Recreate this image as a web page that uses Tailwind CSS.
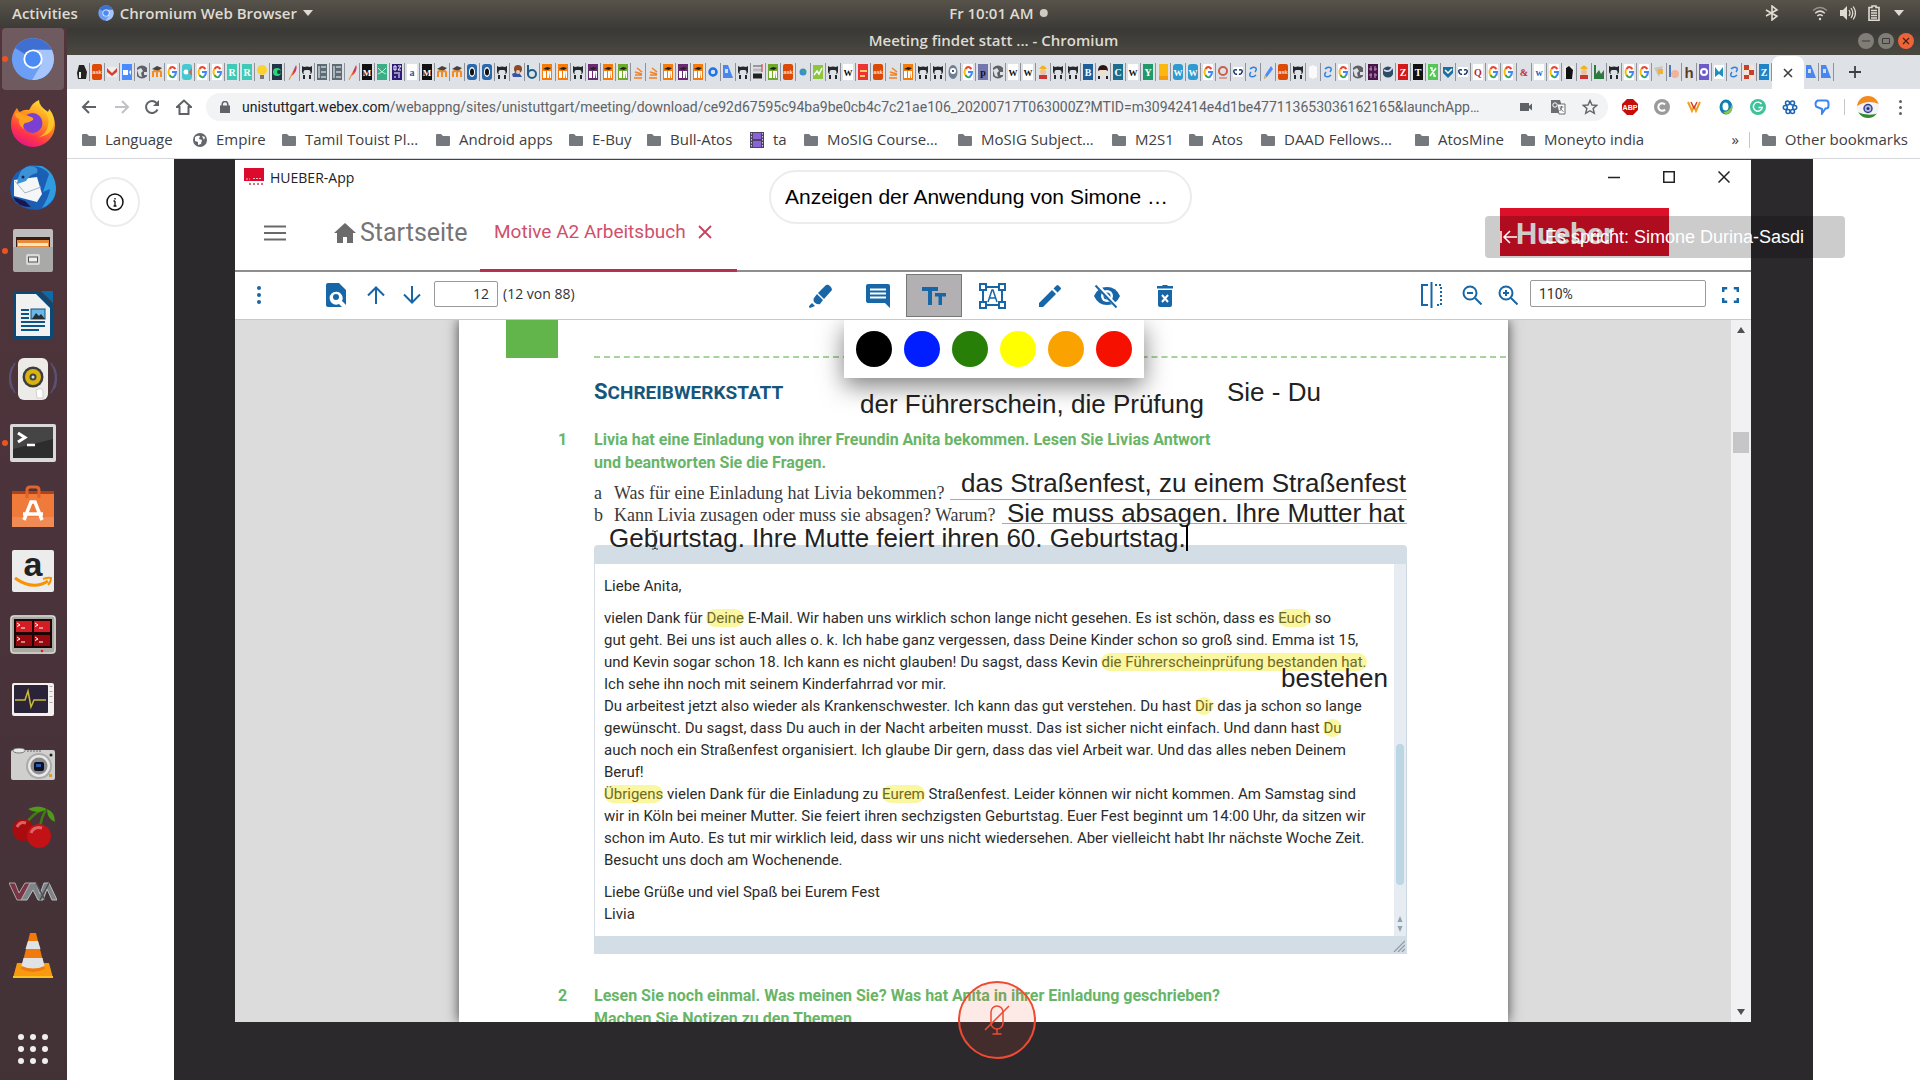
<!DOCTYPE html>
<html lang="de">
<head>
<meta charset="utf-8">
<title>Meeting findet statt ... - Chromium</title>
<script src="https://cdn.jsdelivr.net/npm/@tailwindcss/browser@4"></script>
</head>
<body class="h-screen overflow-hidden flex flex-col bg-white font-['Open_Sans',sans-serif] text-[15px] text-[#3c4043]">

<!-- GNOME top bar -->
<header class="relative h-7 shrink-0 flex items-center bg-linear-to-b from-[#57534a] to-[#3d3b37] text-[#dfdbd2] font-semibold px-3 pb-0.5">
  <button class="mr-5">Activities</button>
  <button class="flex items-center gap-1.5">
    <svg class="size-4" viewBox="0 0 48 48"><use href="#chromium"/></svg>
    <span>Chromium Web Browser</span>
    <svg class="w-2.5 h-1.5" viewBox="0 0 10 6"><path d="M0 0h10L5 6z" fill="#dfdbd2"/></svg>
  </button>
  <button class="absolute left-[52%] -translate-x-1/2 flex items-center gap-1.5">
    <span>Fr 10:01 AM</span><span class="size-2 rounded-full bg-[#cfcbc2]"></span>
  </button>
  <div class="ml-auto flex items-center text-[#dfdbd2]">
    <svg class="w-4 h-4 mr-8" viewBox="0 0 16 16" fill="none" stroke="currentColor" stroke-width="1.6"><path d="M2 5l11 6.2L8 15V1l5 3.8L2 11"/></svg>
    <svg class="w-4 h-4 mr-3" viewBox="0 0 16 16" fill="none" stroke="currentColor" stroke-width="1.5"><path d="M1 5.5Q8-.5 15 5.5" opacity=".5"/><path d="M3.2 8.300Q8 4 12.800 8.300M5.300 11Q8 8.500 10.700 11"/><circle cx="8" cy="14" r="1.200" fill="currentColor" stroke="none"/></svg>
    <svg class="w-4 h-4 mr-3" viewBox="0 0 16 16"><path d="M0 5h3l4-4v14l-4-4H0z" fill="currentColor"/><path d="M9 5q2 3 0 6M11 3q3.500 5 0 10M13.200 1.500q4.500 6.500 0 13" fill="none" stroke="currentColor" stroke-width="1.300"/></svg>
    <svg class="w-3 h-4 mr-3.5" viewBox="0 0 12 16"><path d="M4 1h4v1.500h3V15.200H1V2.500h3z" fill="none" stroke="currentColor" stroke-width="1.600"/><path d="M3 5.500h6M3 8h6M3 10.500h6M3 13h6" stroke="currentColor" stroke-width="1.300"/></svg>
    <svg class="w-2.5 h-1.5 mr-1" viewBox="0 0 10 6"><path d="M0 0h10L5 6z" fill="currentColor"/></svg>
  </div>
</header>

<div class="flex-1 min-h-0 flex">

<!-- Dock -->
<nav aria-label="Dock" class="w-[67px] shrink-0 bg-linear-to-b from-[#50363c] via-[#4b333b] to-[#423236] flex flex-col">
  <svg class="hidden">
    <symbol id="chromium" viewBox="0 0 48 48">
      <circle cx="24" cy="24" r="23" fill="#6a9ff5"/>
      <path d="M24 24L4.500 12A23 23 0 0 1 44.500 14z" fill="#3f6fd0"/>
      <path d="M24 14h20.500A23 23 0 0 1 23 47l10-17z" fill="#a6c5fa"/>
      <circle cx="24" cy="24" r="10.500" fill="#fff"/><circle cx="24" cy="24" r="8.500" fill="#4a8af4"/>
    </symbol>
  </svg>
  <ul class="flex flex-col" id="dock">
    <li class="relative h-16"><button aria-label="Chromium" class="ml-0.5 w-[62px] h-[62px] rounded-sm bg-[#6f5a5f] flex items-center justify-center"><svg class="size-11" viewBox="0 0 48 48"><use href="#chromium"/></svg></button><span class="absolute left-0.5 top-7 size-1.5 rounded-full bg-[#e95420]"></span></li>
    <li class="h-16"><button aria-label="Firefox" class="w-[66px] h-[62px] flex items-center justify-center"><svg class="size-12" viewBox="0 0 48 48"><defs><linearGradient id="ff" x1="0.800" y1="0" x2="0.300" y2="1"><stop offset="0" stop-color="#ffe83a"/><stop offset=".45" stop-color="#ff8a1c"/><stop offset=".75" stop-color="#ff3647"/><stop offset="1" stop-color="#e31587"/></linearGradient></defs><path d="M2 26C2 18 5 13 8 9q1 3 3 4 4-3 9-2 4-8 10-10 0 6 6 10l3 2q1-1 1-3 6 8 6 16a22 22 0 0 1-44 0z" fill="url(#ff)"/><circle cx="23.500" cy="24" r="10" fill="#7b3fd4"/><path d="M6 14q5-1 8 1l8 3q3 1 2 3-5 3-8 3-3 2-1 6-6-4-5-10-4-1-4-6z" fill="#ffa21f"/><path d="M30 1q0 8 6 12 5 6 3 14-2 8-9 11 14-2 15-15 0-8-5-13 0 2-1 3-9-6-9-12z" fill="#ffd02c" opacity=".8"/></svg></button></li>
    <li class="h-16"><button aria-label="Thunderbird" class="w-[66px] h-[62px] flex items-center justify-center"><svg class="size-12" viewBox="0 0 48 48"><path d="M18 3q14-4 23 7 9 12 4 26-6 10-18 11-17-1-24-12-5-14 4-25z" fill="#1b5fb4"/><path d="M22 3q12 0 18 8l-6 18 7-3q-1 8-8 19 14-6 14-20Q46 9 33 3z" fill="#2f9be0"/><path d="M5 17l23-3 5 17-5 8L5 33z" fill="#f4f6f8"/><path d="M6 18l10 12 16-6" fill="none" stroke="#a9b4c0"/><path d="M4 34l12 4 6 6Q8 44 4 34z" fill="#1a1750"/><path d="M9 15Q12 4 21 3q10 1 7 7-7 1-11 8l-9 3z" fill="#3c92d6"/><circle cx="14" cy="14" r="1.500" fill="#122a55"/></svg></button></li>
    <li class="relative h-16"><button aria-label="Files" class="w-[66px] h-[62px] flex items-center justify-center"><svg class="size-11" viewBox="0 0 44 44"><path d="M2 2q0-2 2-2h36q2 0 2 2v38H2z" fill="#bdbdbd"/><rect x="5" y="8" width="34" height="12" fill="#3a1d12"/><path d="M6 11h32v8H6z" fill="#e88a3a"/><path d="M7 14h30v3H7z" fill="#fbe3c0"/><path d="M2 18h40v23q0 2-2 2H4q-2 0-2-2z" fill="#a9a9a7"/><rect x="15" y="25" width="14" height="11" rx="2" fill="#d9d9d9"/><rect x="17.500" y="28" width="9" height="5" fill="#eee" stroke="#555"/></svg></button><span class="absolute left-0.5 top-7 size-1.5 rounded-full bg-[#e95420]"></span></li>
    <li class="h-16"><button aria-label="LibreOffice Writer" class="w-[66px] h-[62px] flex items-center justify-center"><svg class="w-10 h-12" viewBox="0 0 40 48"><path d="M2 0h24l14 14v32q0 2-2 2H2q-2 0-2-2V2q0-2 2-2z" fill="#0b4a78"/><path d="M28 0h12v12z" fill="#0b6cab"/><path d="M3 3h20l14 14v28H3z" fill="#f1f1f1"/><path d="M8 18h8v2H8zM8 22h8v2H8zM8 26h8v2H8zM8 30h24v2H8zM8 34h24v2H8zM8 38h18v2H8z" fill="#0b5687"/><rect x="18" y="18" width="14" height="10" fill="#6db5e4" stroke="#0b5687"/><path d="M19 28l4-6 3 3 2-2 4 5z" fill="#243036"/></svg></button></li>
    <li class="h-16"><button aria-label="Rhythmbox" class="w-[66px] h-[62px] flex items-center justify-center"><svg class="size-12" viewBox="0 0 48 48"><path d="M6 8q-9 14 0 30M3 12q-5 12 0 22M42 8q9 14 0 30M45 12q5 12 0 22" fill="none" stroke="#5a5175" stroke-width="1.500"/><rect x="9" y="3" width="30" height="42" rx="6" fill="#ecebe8"/><circle cx="24" cy="22" r="10.500" fill="#3d3d3d"/><circle cx="24" cy="22" r="8" fill="#d8b411"/><circle cx="24" cy="22" r="3.500" fill="#444"/><circle cx="24" cy="22" r="1.500" fill="#ddd"/><path d="M27 35q6-3 7 1v7h-6z" fill="#fff" stroke="#d0d0d0"/></svg></button></li>
    <li class="relative h-16"><button aria-label="Terminal" class="w-[66px] h-[62px] flex items-center justify-center"><svg class="w-12 h-10" viewBox="0 0 48 40"><rect x="1" y="1" width="46" height="38" rx="2" fill="#d9d9d7"/><rect x="4" y="4" width="40" height="31" fill="#2d2d2d"/><path d="M4 4h40v12L4 26z" fill="#454545"/><path d="M9 10l7 4.500L9 19" fill="none" stroke="#fff" stroke-width="3"/><path d="M18 22h8" stroke="#fff" stroke-width="2.500"/></svg></button><span class="absolute left-0.5 top-7 size-1.5 rounded-full bg-[#e95420]"></span></li>
    <li class="h-16"><button aria-label="Ubuntu Software" class="w-[66px] h-[62px] flex items-center justify-center"><svg class="size-11" viewBox="0 0 44 44"><path d="M1 6h42v8H1z" fill="#b0421a"/><path d="M1 9h42v33H1z" fill="#ef7a3a"/><path d="M1 32h42v10H1z" fill="#f08b55"/><path d="M16 13V5q0-3 3-3h6q3 0 3 3v8" fill="none" stroke="#e4632a" stroke-width="3"/><path d="M13 35l7-18h4l7 18M12 29h20" fill="none" stroke="#fff" stroke-width="3.500"/></svg></button></li>
    <li class="h-16"><button aria-label="Amazon" class="w-[66px] h-[62px] flex items-center justify-center"><svg class="size-11" viewBox="0 0 44 44"><rect x="1" y="1" width="42" height="42" rx="2" fill="#ececec"/><text x="22" y="27" text-anchor="middle" font-family="Liberation Sans, sans-serif" font-weight="700" font-size="34" fill="#222">a</text><path d="M4 29q18 13 33 3" fill="none" stroke="#f79400" stroke-width="3"/><path d="M32 30q6-2 8-1 0 4-3 7" fill="none" stroke="#f79400" stroke-width="2"/></svg></button></li>
    <li class="h-16"><button aria-label="Terminator" class="w-[66px] h-[62px] flex items-center justify-center"><svg class="w-12 h-10" viewBox="0 0 48 40"><rect x="1" y="0" width="46" height="39" rx="4" fill="#a9aaa4"/><rect x="2" y="1" width="44" height="37" rx="3" fill="none" stroke="#e4e4df"/><rect x="5" y="4" width="38" height="29" fill="#1c0304"/><path d="M7 6h16v11H7zM25 6h16v11H25z" fill="#d31c24"/><path d="M7 20h16v11H7zM25 20h16v11H25z" fill="#97090f"/><path d="M8 8l3 2-3 1.500M12 13h4M26 8l3 2-3 1.500M30 13h4M8 22l3 2-3 1.500M12 27h4M26 22l3 2-3 1.500M30 27h4" stroke="#fff" fill="none"/><circle cx="33" cy="36" r="1.300" fill="#d22"/></svg></button></li>
    <li class="h-16"><button aria-label="System Monitor" class="w-[66px] h-16 flex items-center justify-center"><svg class="w-11 h-[34px]" viewBox="0 0 44 34"><rect x="1" width="42" height="33" rx="2" fill="#f3f0ee"/><rect x="3" y="2" width="34" height="28" rx="1" fill="#2b2438"/><path d="M4 17h10l3-9 3 16 3-7h12" fill="none" stroke="#c9bb3a" stroke-width="1.500"/><path d="M40 3v1M40 8v1M40 13v1M40 19v1" stroke="#aaa" stroke-width="3"/></svg></button></li>
    <li class="h-16"><button aria-label="Camera" class="w-[66px] h-16 flex items-center justify-center"><svg class="w-11 h-8" viewBox="0 0 44 32"><rect y="2" width="44" height="30" rx="2" fill="#cfcfcd"/><ellipse cx="8" cy="2.500" rx="6" ry="2.500" fill="#e8e8e8" stroke="#777"/><path d="M16 3h14" stroke="#666" stroke-dasharray="2 1"/><circle cx="28" cy="18" r="13" fill="#aaa"/><circle cx="28" cy="18" r="11" fill="#e8e8e8"/><circle cx="28" cy="18" r="8.500" fill="#8b8b8b"/><rect x="23" y="14" width="10" height="9" rx="2" fill="#0b1020"/><path d="M25 16h5v3h-5z" fill="#2a58b0"/><circle cx="40" cy="7" r="1.500" fill="#222"/><rect x="38" y="26" width="3" height="3" fill="#e69a21"/></svg></button></li>
    <li class="h-16"><button aria-label="CherryTree" class="w-[66px] h-[62px] flex items-center justify-center"><svg class="size-11" viewBox="0 0 44 44"><path d="M14 20Q22 8 33 4M29 24Q30 12 35 5" fill="none" stroke="#3f7d12" stroke-width="2.500"/><path d="M17 4q10-5 19 0-10 6-19 0zM36 4q8 3 8 13-8-3-8-13z" fill="#4f9a16"/><ellipse cx="12" cy="25" rx="10.500" ry="11" fill="#a90c0f"/><ellipse cx="28" cy="31" rx="12" ry="12" fill="#c31216"/><path d="M6 22q3-6 9-4M20 28q3-7 11-5" stroke="#e88" stroke-width="3" fill="none" opacity=".7"/></svg></button></li>
    <li class="h-16"><button aria-label="VMM" class="w-[66px] h-16 flex items-center justify-center"><svg class="w-12 h-5" viewBox="0 0 48 20"><path d="M21 1h6l4 11 4-11h5l8 17h-5l-5-11-4 11h-5l-5-10-6 10h-6z" fill="#7f8488" stroke="#bcbcbc"/><path d="M0 1h6l4 10 6-10h5l-9 17H8z" fill="#7d3346" stroke="#a9a9a9"/><path d="M27 1l9 17M40 1l-9 17" stroke="#4c5054" stroke-width="1.500"/></svg></button></li>
    <li class="h-16"><button aria-label="VLC" class="w-[66px] h-[62px] flex items-center justify-center"><svg class="w-10 h-12" viewBox="0 0 40 48"><path d="M4 32h32l4 15H0z" fill="#f79a12"/><path d="M0 45h40v2H0z" fill="#ffc01f"/><path d="M17 2h6l9 36q-12 6-24 0z" fill="#f07a0c"/><path d="M15 10h10l2.500 8h-15zM10.500 27h19l2 8q-11 5-23 0z" fill="#dfe3e6"/></svg></button></li>
  </ul>
  <button aria-label="Show applications" class="mt-auto mb-4 mx-auto pr-0.5 grid grid-cols-3 gap-1.5"><span class="size-1.5 rounded-full bg-[#f1efee]"></span><span class="size-1.5 rounded-full bg-[#f1efee]"></span><span class="size-1.5 rounded-full bg-[#f1efee]"></span><span class="size-1.5 rounded-full bg-[#f1efee]"></span><span class="size-1.5 rounded-full bg-[#f1efee]"></span><span class="size-1.5 rounded-full bg-[#f1efee]"></span><span class="size-1.5 rounded-full bg-[#f1efee]"></span><span class="size-1.5 rounded-full bg-[#f1efee]"></span><span class="size-1.5 rounded-full bg-[#f1efee]"></span></button>
</nav>

<!-- Browser window -->
<div class="flex-1 min-w-0 flex flex-col">
  <div class="relative h-[27px] shrink-0 flex items-center justify-center pb-0.5 bg-linear-to-b from-[#3a3834] to-[#4a4841] text-[#dfdbd2] font-semibold">
    <h1>Meeting findet statt ... - Chromium</h1>
    <div class="absolute right-1.5 top-[5px] flex gap-1">
      <button aria-label="Minimize" class="size-4 rounded-full bg-[#7f7d76] flex items-center justify-center"><svg class="size-2" viewBox="0 0 8 8"><path d="M0 4h8" stroke="#3c3b37"/></svg></button>
      <button aria-label="Maximize" class="size-4 rounded-full bg-[#7f7d76] flex items-center justify-center"><svg class="size-2" viewBox="0 0 8 8"><path d="M.5 1.500h7v5h-7z" fill="none" stroke="#3c3b37"/></svg></button>
      <button aria-label="Close" class="size-4 rounded-full bg-[#ee6439] flex items-center justify-center"><svg class="size-2" viewBox="0 0 8 8"><path d="M1 1l6 6M7 1L1 7" stroke="#4a2015" stroke-width="1.300"/></svg></button>
    </div>
  </div>

  <!-- Tab strip -->
  <div class="h-[34px] shrink-0 flex bg-[#dee1e6] pl-2">
    <div id="tabs" class="flex-1 min-w-0 flex items-center"></div>
    <div class="w-8 mt-px rounded-t-lg bg-white flex items-center justify-center"><button aria-label="Close tab"><svg class="size-2.5" viewBox="0 0 10 10"><path d="M1 1l8 8M9 1L1 9" stroke="#3c4043" stroke-width="1.600"/></svg></button></div>
    <div id="tabs2" class="w-[30px] flex items-center"></div>
    <button aria-label="New tab" class="ml-3.5 mr-[58px] self-center"><svg class="size-3.5" viewBox="0 0 14 14"><path d="M7 1v12M1 7h12" stroke="#3c4043" stroke-width="1.800"/></svg></button>
  </div>

  <!-- Address bar -->
  <div class="h-9 shrink-0 flex items-center bg-white pl-3 pr-3.5 text-[#5f6368]">
    <button aria-label="Back" class="w-[33px] pl-0.5"><svg class="size-4" viewBox="0 0 16 16" fill="none" stroke="#5f6368" stroke-width="2"><path d="M15 8H2M8 2L2 8l6 6"/></svg></button>
    <button aria-label="Forward" class="w-8 pl-0.5"><svg class="size-4" viewBox="0 0 16 16" fill="none" stroke="#bfc1c4" stroke-width="2"><path d="M1 8h13M8 2l6 6-6 6"/></svg></button>
    <button aria-label="Reload" class="w-8"><svg class="size-4" viewBox="0 0 16 16"><path d="M13.500 10.500A6 6 0 1 1 12.500 4" fill="none" stroke="#5f6368" stroke-width="2"/><path d="M15 1v6H9z" fill="#5f6368"/></svg></button>
    <button aria-label="Home" class="w-[30px]"><svg class="size-4" viewBox="0 0 16 16" fill="none" stroke="#5f6368" stroke-width="2"><path d="M8 1.500L1 8h2.500v7h9V8H15z"/></svg></button>
    <div class="flex-1 min-w-0 h-7 rounded-full bg-[#f1f3f4] flex items-center pl-3.5 pr-2.5 font-[Roboto,sans-serif] text-sm">
      <svg class="w-2.5 h-3 mr-3 shrink-0" viewBox="0 0 10 12"><path d="M0 4.500h10V12H0z" fill="#5f6368"/><path d="M2.200 5V3.300a2.800 2.800 0 0 1 5.600 0V5" fill="none" stroke="#5f6368" stroke-width="1.500"/></svg>
      <div class="flex-1 min-w-0 truncate"><span class="text-[#202124]">unistuttgart.webex.com</span>/webappng/sites/unistuttgart/meeting/download/ce92d67595c94ba9be0cb4c7c21ae106_20200717T063000Z?MTID=m30942414e4d1be477113653036162165&amp;launchApp…</div>
      <div class="flex items-center gap-4 shrink-0">
        <svg class="size-4" viewBox="0 0 16 16"><path d="M2 4h9v3l3-2.500v7L11 9v3H2z" fill="#5f6368"/></svg>
        <svg class="size-4" viewBox="0 0 16 16"><path d="M1 1h9l4 13H1z" fill="#6b6f73"/><path d="M7 5h8v10H9z" fill="#fff" stroke="#6b6f73"/><path d="M9.500 8h4M11.500 7v1q0 3-2 4M10 9q1.500 2.500 3.500 3.500" stroke="#6b6f73" fill="none"/><circle cx="5" cy="6" r="2.200" fill="none" stroke="#fff"/></svg>
        <svg class="size-4" viewBox="0 0 16 16"><path d="M8 1.500l2 4.500 4.800.4-3.700 3.100 1.200 4.800L8 11.700l-4.300 2.600 1.200-4.800L1.200 6.400 6 6z" fill="none" stroke="#5f6368" stroke-width="1.400"/></svg>
      </div>
    </div>
    <div class="flex items-center gap-4 ml-3.5">
      <svg class="size-4" viewBox="0 0 16 16"><path d="M5 0h6l5 5v6l-5 5H5l-5-5V5z" fill="#c70d0c"/><text x="8" y="10.500" text-anchor="middle" font-family="Liberation Sans, sans-serif" font-weight="700" font-size="7" fill="#fff">ABP</text></svg>
      <svg class="size-4" viewBox="0 0 16 16"><circle cx="8" cy="8" r="8" fill="#9a9a9a"/><path d="M11 5.500a3.800 3.800 0 1 0 0 5" stroke="#fff" stroke-width="2" fill="none"/></svg>
      <svg class="size-4" viewBox="0 0 16 16"><path d="M2 3l4 9 2-5M8 7l2 5 4-9" fill="none" stroke="#f0a020" stroke-width="2"/><path d="M5 3l3 6 3-6" fill="none" stroke="#d8402a" stroke-width="1.500"/></svg>
      <svg class="size-4" viewBox="0 0 16 16"><ellipse cx="8" cy="8" rx="6.500" ry="7.500" fill="#0f7fb0"/><path d="M8 15.500Q16 14 14 5 12 13 5 13z" fill="#8ec641"/><ellipse cx="7.500" cy="7.500" rx="3" ry="4" fill="#fff"/></svg>
      <svg class="size-4" viewBox="0 0 16 16"><circle cx="8" cy="8" r="8" fill="#3cc39a"/><path d="M11.500 5a4.500 4.500 0 1 0 .8 3.500H8.500" stroke="#fff" stroke-width="1.400" fill="none"/></svg>
      <svg class="size-4" viewBox="0 0 16 16" fill="none" stroke="#1b62b5" stroke-width="1.500"><circle cx="5.500" cy="4" r="2"/><circle cx="10.500" cy="4" r="2"/><circle cx="3.300" cy="8.500" r="2"/><circle cx="12.700" cy="8.500" r="2"/><circle cx="6" cy="12.500" r="2"/><circle cx="10.500" cy="12.500" r="2"/></svg>
      <svg class="size-4" viewBox="0 0 16 16"><path d="M4 1.500h8q2.500 0 2.500 3V7q0 2.500-3 2.500L8 14.500V10L3 8Q1.500 7.500 1.500 5t2.500-3.500z" fill="none" stroke="#3a86f0" stroke-width="2"/></svg>
    </div>
    <span class="w-px h-4 ml-3.5 bg-[#c4c7ca]"></span>
    <svg class="size-[22px] ml-3 mr-5" viewBox="0 0 22 22"><clipPath id="av"><circle cx="11" cy="11" r="11"/></clipPath><g clip-path="url(#av)"><path d="M0 0h22v22H0z" fill="#f4f4f4"/><path d="M0 0h22v8Q11 3 0 10z" fill="#f58a1c"/><path d="M0 16q12 5 22 1v6H0z" fill="#2f8d2b"/></g><circle cx="11" cy="12.500" r="4" fill="#b5bce0" stroke="#34408f" stroke-width="1.500"/><circle cx="11" cy="12.500" r="1.500" fill="#26307a"/></svg>
    <button aria-label="Menu" class="flex flex-col gap-[3px] mr-1"><span class="size-[3px] rounded-full bg-[#5f6368]"></span><span class="size-[3px] rounded-full bg-[#5f6368]"></span><span class="size-[3px] rounded-full bg-[#5f6368]"></span></button>
  </div>

  <!-- Bookmarks -->
  <div class="h-[34px] shrink-0 flex items-center bg-white border-b border-[#d5d7da] pl-[15px] pr-3 pb-1 whitespace-nowrap">
    <svg class="hidden"><symbol id="folder" viewBox="0 0 14 12"><path d="M0 1q0-1 1-1h4l2 2h6q1 0 1 1v8q0 1-1 1H1q-1 0-1-1z" fill="#75787c"/></symbol></svg>
    <a href="#" class="w-[111px] flex items-center gap-[9px]"><svg class="w-3.5 h-3 shrink-0"><use href="#folder"/></svg>Language</a>
    <a href="#" class="w-[89px] flex items-center gap-[9px]"><svg class="size-3.5 shrink-0" viewBox="0 0 14 14"><circle cx="7" cy="7" r="7" fill="#63676b"/><path d="M2 4q3-2 5-1l-1 3 3 1-1 4-3 1v-3L2 8zM9 3l3 1-1 3z" fill="#fff"/></svg>Empire</a>
    <a href="#" class="w-[154px] flex items-center gap-[9px]"><svg class="w-3.5 h-3 shrink-0"><use href="#folder"/></svg>Tamil Touist Pl…</a>
    <a href="#" class="w-[133px] flex items-center gap-[9px]"><svg class="w-3.5 h-3 shrink-0"><use href="#folder"/></svg>Android apps</a>
    <a href="#" class="w-[78px] flex items-center gap-[9px]"><svg class="w-3.5 h-3 shrink-0"><use href="#folder"/></svg>E-Buy</a>
    <a href="#" class="w-[103px] flex items-center gap-[9px]"><svg class="w-3.5 h-3 shrink-0"><use href="#folder"/></svg>Bull-Atos</a>
    <a href="#" class="w-[54px] flex items-center gap-[9px]"><svg class="w-3.5 h-4 shrink-0" viewBox="0 0 14 16"><path d="M0 0h14v16H0z" fill="#4c4360"/><path d="M3 1h8v6H3zM3 9h8v6H3z" fill="#8c62d9"/><path d="M1.500 1v14M12.500 1v14" stroke="#cfc9dd" stroke-dasharray="1.500 1.500"/></svg>ta</a>
    <a href="#" class="w-[154px] flex items-center gap-[9px]"><svg class="w-3.5 h-3 shrink-0"><use href="#folder"/></svg>MoSIG Course…</a>
    <a href="#" class="w-[154px] flex items-center gap-[9px]"><svg class="w-3.5 h-3 shrink-0"><use href="#folder"/></svg>MoSIG Subject…</a>
    <a href="#" class="w-[77px] flex items-center gap-[9px]"><svg class="w-3.5 h-3 shrink-0"><use href="#folder"/></svg>M2S1</a>
    <a href="#" class="w-[72px] flex items-center gap-[9px]"><svg class="w-3.5 h-3 shrink-0"><use href="#folder"/></svg>Atos</a>
    <a href="#" class="w-[154px] flex items-center gap-[9px]"><svg class="w-3.5 h-3 shrink-0"><use href="#folder"/></svg>DAAD Fellows…</a>
    <a href="#" class="w-[106px] flex items-center gap-[9px]"><svg class="w-3.5 h-3 shrink-0"><use href="#folder"/></svg>AtosMine</a>
    <a href="#" class="flex items-center gap-[9px]"><svg class="w-3.5 h-3 shrink-0"><use href="#folder"/></svg>Moneyto india</a>
    <button class="ml-auto mr-2.5">»</button>
    <span class="w-px h-4 bg-[#c4c7ca] mr-3"></span>
    <a href="#" class="flex items-center gap-[9px]"><svg class="w-3.5 h-3 shrink-0"><use href="#folder"/></svg>Other bookmarks</a>
  </div>

  <!-- Webex meeting -->
  <main class="relative flex-1 min-h-0 px-[107px] bg-white">
    <button aria-label="Info" class="absolute left-[23px] top-[18px] size-[50px] rounded-full border-2 border-[#ececec] bg-white flex items-center justify-center"><svg class="size-[18px]" viewBox="0 0 18 18"><circle cx="9" cy="9" r="8" fill="none" stroke="#111" stroke-width="1.500"/><path d="M9 8v5M9 5v1.500M7.500 8H9M7.500 13h3" stroke="#111" stroke-width="1.300"/></svg></button>

    <div class="h-full bg-[#2b292c] pl-[61px] pr-[62px] pb-[58px]">
      <!-- Shared application window -->
      <section class="h-full flex flex-col bg-white border-t border-[#2f4f45] font-[Roboto,sans-serif]">
        <div class="h-9 shrink-0 flex items-center pl-[9px] pb-0.5 text-[14px] text-[#222] font-['Open_Sans',sans-serif]">
          <svg class="w-5 h-[18px] mr-1.5" viewBox="0 0 20 18"><path d="M0 0h20v13H0z" fill="#dc0a2c"/><path d="M2 11h4M9 10.500h9" stroke="#f7b9c2" stroke-dasharray="2 1"/><path d="M5 16h14" stroke="#dc6a7a" stroke-width="2" stroke-dasharray="2 2"/></svg>
          HUEBER-App
          <div class="ml-auto flex items-center gap-[43px] mr-[21px]">
            <button aria-label="Minimieren"><svg class="size-3" viewBox="0 0 12 12"><path d="M0 6.500h12" stroke="#222" stroke-width="1.500"/></svg></button>
            <button aria-label="Maximieren"><svg class="size-3" viewBox="0 0 12 12"><path d="M.75.75h10.500v10.500H.75z" fill="none" stroke="#222" stroke-width="1.500"/></svg></button>
            <button aria-label="Schließen"><svg class="size-3" viewBox="0 0 12 12"><path d="M.5.500l11 11M11.500.500l-11 11" stroke="#222" stroke-width="1.500"/></svg></button>
          </div>
        </div>
        <div class="h-[76px] shrink-0 flex border-b-2 border-[#8e8e8e]">
          <button aria-label="Menü" class="ml-[29px] self-center"><svg class="w-[22px] h-4" viewBox="0 0 22 16"><path d="M0 1.500h22M0 8h22M0 14.500h22" stroke="#6a6a6a" stroke-width="2"/></svg></button>
          <a href="#" class="ml-12 w-[146px] flex items-center gap-1 text-[25px] text-[#757575]"><svg class="w-[22px] h-5 shrink-0" viewBox="0 0 22 20"><path d="M11 0l11 10h-3v10h-6v-6H9v6H3V10H0z" fill="#6b6b6b"/></svg>Startseite</a>
          <div class="w-[257px] h-[76px] border-b-3 border-[#b8304f] flex items-center pl-3.5 pb-px text-[19px] text-[#d0506c]">Motive A2 Arbeitsbuch<button aria-label="Tab schließen" class="ml-3"><svg class="size-3.5" viewBox="0 0 14 14"><path d="M1 1l12 12M13 1L1 13" stroke="#c8415f" stroke-width="1.800"/></svg></button></div>
          <div class="ml-auto mr-[82px] mt-3 w-[169px] h-12 bg-[#dc1028] text-white font-bold text-[30px] leading-[52px] pl-4">Hueber</div>
        </div>

        <!-- Reader toolbar -->
        <div class="h-12 shrink-0 flex items-center border-b border-[#c9c9c9] text-[#1767a8]">
          <div class="w-[557px] flex items-center pb-0.5">
            <button aria-label="Mehr" class="ml-[22px] flex flex-col gap-[3px]"><span class="size-1 rounded-full bg-[#1767a8]"></span><span class="size-1 rounded-full bg-[#1767a8]"></span><span class="size-1 rounded-full bg-[#1767a8]"></span></button>
            <button aria-label="Suchen" class="ml-[65px]"><svg class="w-5 h-6" viewBox="0 0 20 24"><path d="M2 0h11l7 7v15l-4-4a6.500 6.500 0 1 0-3 3l3 3H2q-2 0-2-2V2q0-2 2-2z" fill="#1767a8"/><circle cx="10" cy="14" r="4" fill="#1767a8" stroke="#fff" stroke-width="2"/><path d="M13 17l5 5" stroke="#fff" stroke-width="2"/></svg></button>
            <button aria-label="Vorige Seite" class="ml-[21px]"><svg class="size-[18px]" viewBox="0 0 18 18" fill="none" stroke="#1767a8" stroke-width="2"><path d="M9 18V1.500M1 9.500l8-8 8 8"/></svg></button>
            <button aria-label="Nächste Seite" class="ml-[18px]"><svg class="size-[18px]" viewBox="0 0 18 18" fill="none" stroke="#1767a8" stroke-width="2"><path d="M9 0v16.500M1 8.500l8 8 8-8"/></svg></button>
            <input id="seite" aria-label="Seite" value="12" class="ml-[13px] mb-0.5 w-16 h-[26px] border border-[#9a9a9a] rounded-xs text-right pr-2 text-sm text-[#333] font-['Open_Sans',sans-serif]">
            <label for="seite" class="ml-[5px] mb-0.5 text-sm text-[#333] font-['Open_Sans',sans-serif]">(12 von 88)</label>
          </div>
          <div class="flex items-center">
            <button aria-label="Marker" class="w-[57px] h-[43px] flex items-center justify-center"><svg class="size-6" viewBox="0 0 24 24"><path d="M17 1q2-1 4 1t2 4l-8 9-6-6zM8 10l6 6-3 4q-3 1-6-2-1-3 0-4zM3 19l3 3-5 2q-2-1 0-3z" fill="#1767a8"/></svg></button>
            <button aria-label="Kommentar" class="w-[57px] h-[43px] flex items-center justify-center"><svg class="size-6" viewBox="0 0 24 24"><path d="M2 0h20q2 0 2 2v22l-5-5H2q-2 0-2-2V2q0-2 2-2z" fill="#1767a8"/><path d="M4 5.500h16M4 9.500h16M4 13.500h16" stroke="#fff" stroke-width="2"/></svg></button>
            <button aria-label="Text" class="w-[56px] h-[43px] border border-[#777] bg-[#b3b0b3] flex items-center justify-center"><svg class="w-6 h-5" viewBox="0 0 24 20"><path d="M0 1h16v4h-6v14H6V5H0zM13 7h11v3.500h-4V19h-3.500v-8.500H13z" fill="#1767a8"/></svg></button>
            <button aria-label="Textfeld" class="w-[60px] h-[43px] flex items-center justify-center"><svg class="w-[27px] h-[26px]" viewBox="0 0 27 26" fill="none" stroke="#1767a8" stroke-width="2"><path d="M7 4h13M7 22h13M4 7v12M23 7v12"/><path d="M1 1h6v6H1zM20 1h6v6h-6zM1 19h6v6H1zM20 19h6v6h-6z"/><path d="M9 19l4-12h1l4 12M10.500 15h6" stroke-width="1.500"/></svg></button>
            <button aria-label="Stift" class="w-[56px] h-[43px] flex items-center justify-center"><svg class="size-[22px]" viewBox="0 0 22 22"><path d="M0 22v-4L13 5l4 4L4 22zM14.500 3.500l3-3q1-1 2 0l2 2q1 1 0 2l-3 3z" fill="#1767a8"/></svg></button>
            <button aria-label="Ausblenden" class="w-[58px] h-[43px] flex items-center justify-center"><svg class="w-[26px] h-6" viewBox="0 0 26 24"><path d="M0 12Q4 3 13 3t13 9q-4 9-13 9T0 12z" fill="#1767a8"/><circle cx="13" cy="12" r="6" fill="#fff"/><circle cx="13" cy="12" r="3.500" fill="#1767a8"/><path d="M3 1l20 22" stroke="#fff" stroke-width="4"/><path d="M1.500 1.500l21 22" stroke="#1767a8" stroke-width="2"/></svg></button>
            <button aria-label="Löschen" class="w-[57px] h-[43px] flex items-center justify-center"><svg class="w-4 h-[22px]" viewBox="0 0 16 22"><path d="M0 1h5l1-1h4l1 1h5v2.500H0zM1 5h14v15q0 2-2 2H3q-2 0-2-2z" fill="#1767a8"/><path d="M5 10l6 7M11 10l-6 7" stroke="#fff" stroke-width="2"/></svg></button>
          </div>
          <div class="ml-auto mr-3 pb-0.5 flex items-center">
            <button aria-label="Vergleichen"><svg class="w-[21px] h-[26px]" viewBox="0 0 21 26" fill="none" stroke="#1767a8" stroke-width="2"><path d="M7 3H1v20h6M10.500 0v26"/><path d="M14 3h6v20h-6" stroke-dasharray="2 2"/></svg></button>
            <button aria-label="Verkleinern" class="ml-5"><svg class="size-5" viewBox="0 0 20 20" fill="none" stroke="#1767a8" stroke-width="2"><circle cx="8" cy="8" r="6.500"/><path d="M13 13l6.500 6.500M5 8h6"/></svg></button>
            <button aria-label="Vergrößern" class="ml-4"><svg class="size-5" viewBox="0 0 20 20" fill="none" stroke="#1767a8" stroke-width="2"><circle cx="8" cy="8" r="6.500"/><path d="M13 13l6.500 6.500M5 8h6M8 5v6"/></svg></button>
            <input aria-label="Zoom" value="110%" class="ml-3 mb-0.5 w-[176px] h-[27px] border border-[#9a9a9a] rounded-xs pl-2 text-sm text-[#333]">
            <button aria-label="Vollbild" class="ml-4"><svg class="w-[17px] h-4" viewBox="0 0 17 16" fill="none" stroke="#1767a8" stroke-width="2.500"><path d="M1.200 5V1.200h4M11.800 1.200h4V5M15.800 11v3.800h-4M5.200 14.800h-4V11"/></svg></button>
          </div>
        </div>

        <!-- Book page -->
        <div class="relative flex-1 min-h-0 overflow-hidden flex bg-[#dddcdd] text-[#2b2b2b]">
          <article class="ml-[224px] mr-[243px] flex-1 min-w-0 bg-white shadow-[0_0_12px_rgba(0,0,0,0.7)]">
            <div class="flex h-[38px] pl-[47px]"><div class="w-[52px] bg-[#62b54a]"></div><div class="ml-9 flex-1 mr-0.5 border-b-2 border-dashed border-[#a9d39c]"></div></div>
            <div class="pl-[135px]">
              <h2 class="mt-5 h-7 leading-7 text-[19px] font-bold text-[#17567c]"><span class="text-[22px]">S</span>CHREIBWERKSTATT</h2>
              <h3 class="relative mt-[22px] leading-[23px] text-base font-bold text-[#68b567]"><span class="absolute -left-9">1</span>Livia hat eine Einladung von ihrer Freundin Anita bekommen. Lesen Sie Livias Antwort<br>und beantworten Sie die Fragen.</h3>
              <div class="mt-2 mr-[101px] leading-[22px] text-lg text-[#3a3a3a] font-['Liberation_Serif',serif]">
                <div class="flex"><span class="w-5">a</span><span>Was für eine Einladung hat Livia bekommen?</span><span class="flex-1 ml-1.5 mb-1 border-b border-[#aaa]"></span></div>
                <div class="flex"><span class="w-5">b</span><span>Kann Livia zusagen oder muss sie absagen? Warum?</span><span class="flex-1 ml-1.5 mb-0.5 border-b border-[#aaa]"></span></div>
              </div>
              <div class="mt-[19px] mr-[101px] flex flex-col">
                <div class="h-[19px] bg-[#d3dde6] rounded-t-sm"></div>
                <div class="flex border-l border-[#d8dce4]">
                  <div class="flex-1 min-w-0 py-[11px] pl-[9px] leading-[22px] text-[15px] whitespace-nowrap">
                    <p>Liebe Anita,</p>
                    <p class="mt-2.5">vielen Dank für <mark class="bg-[#fbf6a0] text-[#6f6a25] rounded-full">Deine</mark> E-Mail. Wir haben uns wirklich schon lange nicht gesehen. Es ist schön, dass es <mark class="bg-[#fbf6a0] text-[#6f6a25] rounded-full">Euch</mark> so<br>gut geht. Bei uns ist auch alles o. k. Ich habe ganz vergessen, dass Deine Kinder schon so groß sind. Emma ist 15,<br>und Kevin sogar schon 18. Ich kann es nicht glauben! Du sagst, dass Kevin <mark class="bg-[#fbf6a0] text-[#6f6a25] rounded-full">die Führerscheinprüfung bestanden hat.</mark><br>Ich sehe ihn noch mit seinem Kinderfahrrad vor mir.</p>
                    <p>Du arbeitest jetzt also wieder als Krankenschwester. Ich kann das gut verstehen. Du hast <mark class="bg-[#fbf6a0] text-[#6f6a25] rounded-full">Dir</mark> das ja schon so lange<br>gewünscht. Du sagst, dass Du auch in der Nacht arbeiten musst. Das ist sicher nicht einfach. Und dann hast <mark class="bg-[#fbf6a0] text-[#6f6a25] rounded-full">Du</mark><br>auch noch ein Straßenfest organisiert. Ich glaube Dir gern, dass das viel Arbeit war. Und das alles neben Deinem<br>Beruf!</p>
                    <p><mark class="bg-[#fbf6a0] text-[#6f6a25] rounded-full">Übrigens</mark> vielen Dank für die Einladung zu <mark class="bg-[#fbf6a0] text-[#6f6a25] rounded-full">Eurem</mark> Straßenfest. Leider können wir nicht kommen. Am Samstag sind<br>wir in Köln bei meiner Mutter. Sie feiert ihren sechzigsten Geburtstag. Euer Fest beginnt um 14:00 Uhr, da sitzen wir<br>schon im Auto. Es tut mir wirklich leid, dass wir uns nicht wiedersehen. Aber vielleicht habt Ihr nächste Woche Zeit.<br>Besucht uns doch am Wochenende.</p>
                    <p class="mt-2.5">Liebe Grüße und viel Spaß bei Eurem Fest<br>Livia</p>
                  </div>
                  <div class="w-[13px] bg-[#e6ecf1] border-r border-[#ccd7e2] flex flex-col items-center pt-[180px] pb-1">
                    <div class="w-2 h-[141px] rounded-full bg-[#bcd6e4]"></div>
                    <svg class="mt-auto w-1.5 h-4" viewBox="0 0 6 16"><path d="M3 0l2.500 6h-5zM3 16l2.500-6h-5z" fill="#8fa3b3"/></svg>
                  </div>
                </div>
                <div class="h-[18px] bg-[#d3dde6] flex justify-end items-end p-0.5"><svg class="size-3" viewBox="0 0 12 12"><path d="M1 12L12 1M5 12l7-7M9 12l3-3" stroke="#8d99a6" stroke-width="1.200"/></svg></div>
              </div>
              <h3 class="relative mt-[30px] leading-[23px] text-base font-bold text-[#68b567]"><span class="absolute -left-9">2</span>Lesen Sie noch einmal. Was meinen Sie? Was hat Anita in ihrer Einladung geschrieben?<br>Machen Sie Notizen zu den Themen</h3>
            </div>
          </article>

          <div class="absolute right-0 inset-y-0 w-5 bg-[#f1f0f2] flex flex-col items-center py-[7px]">
            <svg class="w-2 h-1.5" viewBox="0 0 8 6"><path d="M4 0l4 6H0z" fill="#505050"/></svg>
            <div class="mt-[99px] w-4 h-[21px] bg-[#c6c5c7]"></div>
            <svg class="mt-auto w-2 h-1.5" viewBox="0 0 8 6"><path d="M4 6l4-6H0z" fill="#505050"/></svg>
          </div>

          <!-- Typed annotations on the page canvas -->
          <div class="absolute inset-0 font-['Liberation_Sans',sans-serif] text-[26px] leading-8 text-[#222] whitespace-nowrap">
            <p class="absolute left-[625px] top-[68px]">der Führerschein, die Prüfung</p>
            <p class="absolute left-[992px] top-[56px]">Sie - Du</p>
            <p class="absolute left-[726px] top-[147px]">das Straßenfest, zu einem Straßenfest</p>
            <p class="absolute left-[772px] top-[177px]">Sie muss absagen. Ihre Mutter hat</p>
            <p class="absolute left-[374px] top-[202px] flex items-center">Geburtstag. Ihre Mutte feiert ihren 60. Geburtstag.<span class="w-0.5 h-[26px] bg-black"></span></p>
            <p class="absolute left-[1046px] top-[342px]">bestehen</p>
            <svg class="absolute left-[416px] top-[210px] w-2 h-5" viewBox="0 0 8 20"><path d="M1 1h2l1 1 1-1h2M4 2v16M1 19h2l1-1 1 1h2" fill="none" stroke="#333"/></svg>
          </div>

          <div class="absolute left-[609px] top-0 w-[300px] h-[58px] bg-white shadow-[0_8px_24px_rgba(0,0,0,0.5)] flex items-center justify-center gap-3">
            <button aria-label="Schwarz" class="size-9 rounded-full bg-black"></button>
            <button aria-label="Blau" class="size-9 rounded-full bg-[#001eff]"></button>
            <button aria-label="Grün" class="size-9 rounded-full bg-[#277f08]"></button>
            <button aria-label="Gelb" class="size-9 rounded-full bg-[#ffff00]"></button>
            <button aria-label="Orange" class="size-9 rounded-full bg-[#f9a200]"></button>
            <button aria-label="Rot" class="size-9 rounded-full bg-[#f51000]"></button>
          </div>
        </div>
      </section>
    </div>

    <!-- Meeting overlays -->
    <div class="absolute left-[702px] top-[11px] w-[423px] h-[54px] rounded-full border-2 border-[#ececec] bg-white flex items-center px-3.5 font-['Liberation_Sans',sans-serif] text-[21px] text-black whitespace-nowrap">Anzeigen der Anwendung von Simone …</div>
    <div class="absolute right-[75px] top-[57px] w-[360px] h-[42px] rounded-sm bg-black/20 flex items-center pl-[15px] font-['Liberation_Sans',sans-serif] text-lg text-white">
      <button aria-label="Einklappen" class="mr-7"><svg class="w-[17px] h-4" viewBox="0 0 17 16" fill="none" stroke="#fff" stroke-width="1.500"><path d="M1 2v12M17 8H4M10 2L4 8l6 6"/></svg></button>Es spricht: Simone Durina-Sasdi
    </div>
    <button aria-label="Stummschaltung aufheben" class="absolute left-[891px] bottom-[21px] size-[78px] rounded-full border-2 border-[#f04a33] bg-[#f04a33]/12 flex items-center justify-center"><svg class="w-[26px] h-[30px]" viewBox="0 0 26 30" fill="none" stroke="#f04a33" stroke-width="1.500"><rect x="7" y="1" width="12" height="23" rx="6"/><path d="M13 24v5M8.500 29h9M1 25L25 1"/></svg></button>
  </main>
</div>
</div>

<script>
// Favicons of the crowded tab strip: each entry is either text on a tile or a small drawing.
const tile = (bg, fg, ch, size = 10) => `<path d="M0 0h10v16H0z" fill="${bg}"/><text x="5" y="12" text-anchor="middle" font-family="Liberation Serif, serif" font-weight="700" font-size="${size}" fill="${fg}">${ch}</text>`;
const moodle = bg => `<path d="M0 0h10v16H0z" fill="${bg}"/><path d="M1 5l4-2 4 1-3 2z" fill="#222"/><path d="M1 7h3v7H1zM5 7h2v7H5zM7 7h2v7H8z" fill="#fff"/>`;
const icons = {
  tux: '<path d="M2 1h5l3 7-1 7H1L0 9z" fill="#222"/><path d="M2 8h2v6H2z" fill="#eee"/>',
  ask: '<rect width="10" height="16" rx="2" fill="#dc4a06"/><text x="5" y="10" text-anchor="middle" font-family="Liberation Sans, sans-serif" font-size="6" fill="#fff">ask</text>',
  v: '<path d="M0 3h10v10H0z" fill="#eee"/><path d="M0 4l5 5 5-5v4l-5 4-5-4z" fill="#d6402f"/>',
  zoom: '<path d="M0 0h10v16H0z" fill="#4a8cff"/><path d="M1 6h5v5H1zM7 8l2-2v5z" fill="#fff"/>',
  globe: '<circle cx="5" cy="8" r="6.500" fill="#5f6368"/><path d="M0 6l4-2 2 3-2 2 1 4-3-1zM7 8h3v3H7z" fill="#dee1e6"/>',
  m: '<path d="M0 5l5-3 5 2-4 3z" fill="#444"/><path d="M1 13V8q2-2 4 0v5M5 8q3-2 4 0v5" fill="none" stroke="#f68b1f" stroke-width="2"/>',
  G: '<rect width="10" height="16" rx="1" fill="#fff"/><path d="M8.500 5Q5 1 2.500 5" fill="none" stroke="#ea4335" stroke-width="2"/><path d="M2.300 5q-1.500 3 0 6" fill="none" stroke="#fbbc05" stroke-width="2"/><path d="M2.500 11q2 3.500 5 1.500" fill="none" stroke="#34a853" stroke-width="2"/><path d="M5 8h4q0 3-2 4.500" fill="none" stroke="#4285f4" stroke-width="2"/>',
  cam: '<rect width="10" height="16" rx="3" fill="#45c8cf"/><circle cx="4" cy="8" r="2.500" fill="#fff"/><path d="M6 8l4-4v8z" fill="#a77"/>',
  R: tile('#3fcab5', '#fff', 'R'), bulb: '<circle cx="5" cy="6" r="5" fill="#fbd12d"/><path d="M3 11h4v4H3z" fill="#777"/>',
  spot: '<path d="M0 0h10v16H0z" fill="#243447"/><circle cx="5" cy="8" r="4" fill="#2ad47b"/><circle cx="7" cy="8" r="2" fill="#243447"/>',
  feather: '<path d="M2 16L9 1q2 4-2 9l-4 3z" fill="#d2385c"/><path d="M2 16l4-8" stroke="#f7941d"/>',
  gh: '<path d="M0 2l2 1q3-1 6 0l2-1v6l-1 2H1L0 8z" fill="#24292e"/><rect x="1.500" y="6" width="7" height="5" rx="2" fill="#dee1e6"/><path d="M2 11v4M8 11v4" stroke="#24292e" stroke-width="2" fill="none"/>',
  list: '<path d="M0 0h10v16H0z" fill="#5d6b75"/><path d="M2 2v12M4 3h5M4 8h5M4 13h5" stroke="#fff"/>',
  M: tile('#111', '#fff', 'M', 9), ev: '<path d="M0 0h10v16H0z" fill="#3aaf85"/><path d="M1 4l4 4 4-4M1 10l4-2 4 2" stroke="#c6eadc" fill="none"/>',
  orz: '<path d="M0 0h10v16H0z" fill="#2e1a78"/><path d="M2 2h2v4H2zM6 2h3l-3 4h3M2 9h6M2 13h2M7 10v4" fill="none" stroke="#fff"/>', a: tile('#fff', '#1a5ea8', 'a'),
  O: '<rect width="10" height="16" rx="3" fill="#2b69ad"/><ellipse cx="5" cy="8" rx="3" ry="5" fill="#fff"/><ellipse cx="5" cy="8" rx="2" ry="3.500" fill="#111"/>',
  person: '<circle cx="6" cy="5" r="4" fill="#8a4a2a"/><path d="M0 10l6-3 4 6H1z" fill="#35a"/><circle cx="6" cy="8" r="2" fill="#f2c7a5"/>',
  b: '<path d="M1 1v10" stroke="#205f8c" stroke-width="2"/><circle cx="5" cy="10" r="4" fill="none" stroke="#205f8c" stroke-width="2"/>',
  to: moodle('#f57c0a'), tp: moodle('#6a2c70'), tg: moodle('#6faa2b'),
  so: '<path d="M1 14h8M2 11h7M2 8l7 2M4 4l5 4" stroke="#f48024" stroke-width="1.500"/>',
  gear: '<circle cx="5" cy="8" r="3.500" fill="none" stroke="#1a73e8" stroke-width="2.500"/>',
  tr: '<path d="M0 1h5l5 13H0z" fill="#4a86f0"/><path d="M2 5h3v4H2z" fill="#cfe0ff"/>',
  bars: '<path d="M0 2h9" stroke="#999" stroke-width="2"/><path d="M0 6h9" stroke="#bbb" stroke-width="3"/><path d="M0 12h9" stroke="#222" stroke-width="5"/><path d="M9 0v8" stroke="#d33"/>',
  earth: '<circle cx="5" cy="8" r="3.500" fill="#3a8fd0"/><path d="M4 6l3 1-1 3z" fill="#4fae4a"/>',
  chart: '<path d="M0 1h10v14H0z" fill="#8cc63f"/><path d="M1 11l3-4 2 3 3-6" stroke="#fff" fill="none" stroke-width="1.500"/>',
  W: tile('#fff', '#111', 'W', 9), flag: '<path d="M0 0h10v16H0z" fill="#e33"/><path d="M2 7h7M2 12h5" stroke="#fc6" stroke-width="2"/>',
  owl: '<ellipse cx="5" cy="8" rx="4.500" ry="7" fill="#6d7f92"/><circle cx="5" cy="7" r="3" fill="#fff"/><circle cx="5" cy="7" r="1" fill="#222"/>',
  php: tile('#7377ad', '#111', 'p'), fire: '<path d="M1 5q4-7 8 0z" fill="#f2b21b"/><circle cx="5" cy="8" r="3" fill="#f0bf92"/><path d="M1 11h8v4H1z" fill="#c33"/>',
  B: tile('#1d5f96', '#fff', 'B'), face: '<path d="M0 7q0-6 5-6t5 6l-2-1H2z" fill="#2a1713"/><path d="M2 6h6v5H2z" fill="#f4dccb"/><path d="M1 12v3M9 12v3" stroke="#222" stroke-width="2"/>',
  CF: tile('#1f6d8c', '#fff', 'C'), Y: tile('#21996b', '#fff', 'Y'), yel: '<path d="M1 0h9v16H1z" fill="#fbb80e"/><path d="M1 12h9v4H1z" fill="#f79a0e"/>',
  wp: '<rect width="10" height="16" rx="3" fill="#2f9bd0"/><text x="5" y="11.500" text-anchor="middle" font-family="Liberation Serif, serif" font-weight="700" font-size="9" fill="#fff">W</text>',
  seal: '<circle cx="5" cy="7" r="4" fill="none" stroke="#c9604a" stroke-width="2"/><path d="M1 14h8" stroke="#c9604a"/>',
  x: '<path d="M0 3h10v10H0z" fill="#fff"/><path d="M4 6q-4-1-3 2t3 2M6 6q4-1 3 2t-3 2" stroke="#153468" stroke-width="1.500" fill="none"/>',
  swirl: '<path d="M2 5q3-3 6-1 1 2-1 4M8 11q-3 3-6 1-1-2 1-4" fill="none" stroke="#2b7fe0" stroke-width="1.500"/>',
  pen: '<path d="M1 15l1-4L8 2l2 3-6 8z" fill="#4a8cff"/><path d="M1 15l1-4 2 2z" fill="#f6b73c"/>',
  box: '<path d="M1 3l4-2 4 2v10l-4 2-4-2z" fill="#fafafa"/>',
  slack: '<path d="M0 0h10v16H0z" fill="#4a154b"/><path d="M3 2v5M7 2v5M3 9v5M7 9v5M1 5h3M6 5h3M1 11h3M6 11h3" stroke="#b894b9"/>',
  bg: '<circle cx="5" cy="8" r="5.500" fill="#2c4d68"/><path d="M1 6q5 3 8-2" stroke="#dde" fill="none" stroke-width="1.500"/>',
  Zr: tile('#d31a1a', '#fff', 'Z'), T: tile('#111', '#fff', 'T'), Zg: '<path d="M0 0h10v16H0z" fill="#53c653"/><path d="M2 12l6-8M2 4h2v3M8 12H6V9" stroke="#fff" stroke-width="1.500" fill="none"/>',
  chk: '<path d="M0 3h10v6l-5 5-5-5z" fill="#1f6f9e"/><path d="M2 6l3 3 4-4" stroke="#fff" fill="none" stroke-width="1.500"/>',
  Q: tile('#fff', '#b92b27', 'Q'), amp: tile('#dee1e6', '#c0303a', '&amp;'), who: tile('#fff', '#2b68c0', 'w'),
  blk: '<path d="M0 2h10v12H0z" fill="#eee"/><path d="M2 4l3-2 4 4-1 9H2z" fill="#111"/>', gr: '<path d="M0 1h2v9l3-4 2 4 3-4v9H0z" fill="#2c7a3f"/>',
  c: '<path d="M0 4l9-2-4 11z" fill="#c9c4bc"/><path d="M4 5h5v5H4z" fill="#f0b23a"/>', bb: '<path d="M1 1v12" stroke="#4b78c0" stroke-width="2"/><circle cx="6" cy="10" r="4" fill="#f0b49a"/>',
  h: '<text x="5" y="14" text-anchor="middle" font-family="Liberation Sans, sans-serif" font-weight="700" font-size="15" fill="#5d3b1e">h</text>',
  pu: '<path d="M0 0h10v16H0z" fill="#6c5bc9"/><circle cx="5" cy="8" r="3" fill="none" stroke="#fff" stroke-width="2"/>',
  Mb: '<path d="M0 1h10v14H0z" fill="#fff"/><path d="M1 13V3l4 5 4-5v10l-4-3z" fill="#1f8fc2"/>',
  red: '<path d="M0 1h10v14H0z" fill="#f5e5d5"/><path d="M0 1h5v5H0zM5 6h5v5H5zM0 11h5v4H0z" fill="#c8402c"/>', Zb: tile('#1f83c6', '#fff', 'Z')
};
const order = 'tux ask v zoom globe m G cam G G R R bulb spot feather gh list list feather M ev orz a M m m O O gh person b to to gh tp to tg so so to tp to gear tr gh bars tg ask earth chart gh W flag ask so to gh gh owl G php globe W W fire gh gh B face CF W Y yel wp wp G seal x swirl pen ask gh box swirl G globe slack bg Zr T Zg chk x Q G G amp who G blk fire gr gh G G c bb h pu Mb swirl red Zb'.split(' ');
const tab = k => `<div class="flex-1 min-w-0 h-[18px] flex items-center justify-center border-r border-[#8f9399]"><svg class="w-2.5 h-4 shrink-0" viewBox="0 0 10 16">${icons[k]}</svg></div>`;
document.getElementById('tabs').innerHTML = order.map(tab).join('');
document.getElementById('tabs2').innerHTML = tab('tr') + tab('tr');
</script>
</body>
</html>
